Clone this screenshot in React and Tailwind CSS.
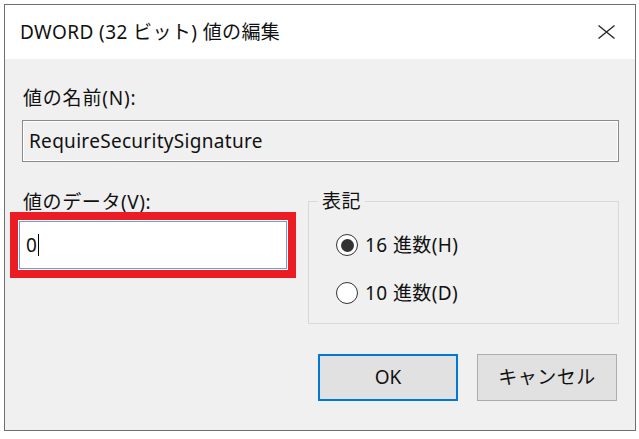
import React from "react";

const font = { fontFamily: '"Noto Sans", "Noto Sans CJK JP", sans-serif' };

// Windows-style radio button
const Radio = ({ checked, label }) => (
  <div className="flex items-center gap-[7px] h-[24px]">
    <div className="w-[22px] h-[22px] rounded-full border border-[#333333] bg-white flex items-center justify-center">
      {checked && <div className="w-[13px] h-[13px] rounded-full bg-[#333333]" />}
    </div>
    <span className="text-[19px] tracking-[0.4px] text-[#111]">{label}</span>
  </div>
);

export default function App() {
  return (
    <div className="w-[639px] h-[439px] bg-white overflow-hidden" style={font}>
      <div className="ml-[4px] mt-[4px] w-[632px] h-[427px] border border-[#6f6f6f] bg-[#f0f0f0] flex flex-col">
        {/* Title bar */}
        <div className="h-[54px] bg-white flex items-center justify-between pl-[15px] pr-[20px]">
          <span className="text-[19px] tracking-[0.4px] text-[#111] leading-none">DWORD (32 ビット) 値の編集</span>
          <svg width="17" height="14" viewBox="0 0 17 14" className="text-[#222]">
            <path d="M0.5 0.5 L16.5 13.5 M16.5 0.5 L0.5 13.5" stroke="currentColor" strokeWidth="1.3" fill="none" />
          </svg>
        </div>

        {/* Body */}
        <div className="flex-1 flex flex-col pt-[27px]">
          <div className="pl-[18px] text-[19px] tracking-[0.8px] leading-[24px] text-[#111]">値の名前(N):</div>
          <div className="ml-[17px] mt-[10px] w-[597px] h-[42px] border border-[#8a8a8a] shadow-[inset_0_0_0_1px_#ffffff] flex items-center pl-[6px] text-[19px] tracking-[0.3px] text-[#111]">
            RequireSecuritySignature
          </div>

          <div className="flex mt-[28px]">
            {/* Data value */}
            <div className="ml-[5px] w-[286px] flex flex-col">
              <div className="pl-[13px] text-[19px] tracking-[0.6px] leading-[24px] text-[#111]">値のデータ(V):</div>
              <div className="mt-[-2px] h-[66px] border-[8px] border-[#ec1c24] bg-white p-[1px] flex">
                <div className="flex-1 border border-[#7a9cc6] bg-white flex items-center pl-[6px] text-[19px] text-[#111]">
                  0<span className="inline-block w-[1px] h-[22px] bg-black ml-[1px]" />
                </div>
              </div>
            </div>

            {/* Format group */}
            <fieldset className="ml-[12px] w-[311px] h-[134px] border border-[#d9d9d9]">
              <legend className="ml-[9px] px-[4px] text-[19px] tracking-[0.6px] leading-[22px] text-[#111]">表記</legend>
              <div className="flex flex-col gap-[24px] pl-[27px] pt-[21px]">
                <Radio checked label="16 進数(H)" />
                <Radio label="10 進数(D)" />
              </div>
            </fieldset>
          </div>

          {/* Buttons */}
          <div className="flex justify-end gap-[19px] pr-[18px] mt-[30px]">
            <button className="w-[140px] h-[47px] bg-[#e1e1e1] border-2 border-[#0078d7] text-[19px] text-[#111]">
              OK
            </button>
            <button className="w-[140px] h-[47px] bg-[#e1e1e1] border border-[#adadad] text-[19px] tracking-[0.5px] text-[#111]">
              キャンセル
            </button>
          </div>
        </div>
      </div>
    </div>
  );
}
